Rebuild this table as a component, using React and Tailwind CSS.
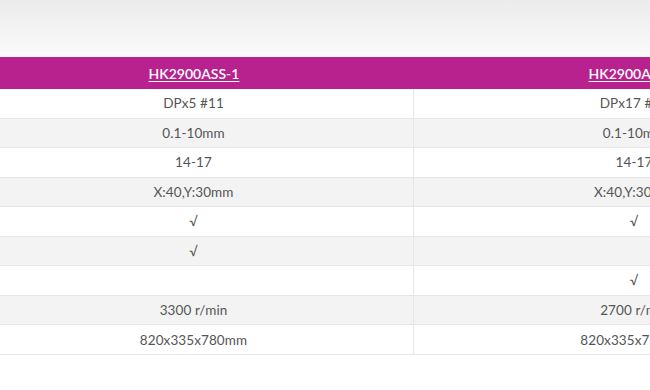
const models = ['HK2900ASS-1', 'HK2900ASS-2']

const rows = [
  ['DPx5 #11', 'DPx17 #11'],
  ['0.1-10mm', '0.1-10mm'],
  ['14-17', '14-17'],
  ['X:40,Y:30mm', 'X:40,Y:30mm'],
  ['√', '√'],
  ['√', ''],
  ['', '√'],
  ['3300 r/min', '2700 r/min'],
  ['820x335x780mm', '820x335x780mm'],
]

export default function App() {
  return (
    <div
      className="h-[390px] w-[650px] overflow-hidden bg-white text-[#555]"
      style={{ fontFamily: 'Lato, "Open Sans", sans-serif' }}
    >
      {/* soft grey band above the spec table */}
      <div className="h-[57px] bg-gradient-to-b from-[#ebebeb] to-[#fbfbfb]" />

      <div className="ml-[-26px] w-[880px]">
        <div className="grid h-[32px] grid-cols-[440px_440px] items-center bg-[#b8228e] text-[14px] font-semibold text-white">
          {models.map((m) => (
            <div key={m} className="text-center">
              <a href="#" className="underline underline-offset-2">
                {m}
              </a>
            </div>
          ))}
        </div>

        {rows.map((cells, i) => (
          <div
            key={i}
            className={`grid h-[29.55px] grid-cols-[440px_440px] border-b border-[#e6e6e6] text-[13.5px] ${
              i % 2 === 1 ? 'bg-[#f3f3f3]' : 'bg-white'
            }`}
          >
            {cells.map((c, j) => (
              <div
                key={j}
                className={`flex items-center justify-center tracking-[0.1px] ${j === 0 ? 'border-r border-[#e6e6e6]' : ''}`}
              >
                {c}
              </div>
            ))}
          </div>
        ))}
      </div>
    </div>
  )
}
